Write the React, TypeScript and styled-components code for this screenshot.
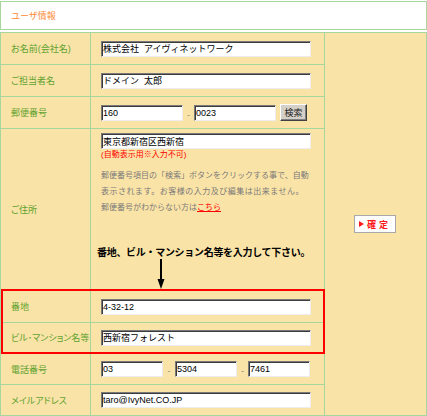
import React from "react";
import styled, { createGlobalStyle } from "styled-components";

const GlobalStyle = createGlobalStyle`
  * { box-sizing: border-box; }
  body {
    margin: 0;
    background: #ffffff;
    font-family: "Liberation Sans", "Noto Sans CJK JP", sans-serif;
  }
`;

const GREEN = "#a6d79c";
const TAN = "#fae3a6";

const Page = styled.div`
  width: 427px;
  padding-top: 1px;
`;

const Header = styled.div`
  height: 29px;
  border: 1px solid ${GREEN};
  background: #ffffff;
  display: flex;
  align-items: center;
  padding-left: 10px;
  color: #ff8a35;
  font-size: 9px;
`;

const Table = styled.div`
  margin-top: 2px;
  display: grid;
  grid-template-columns: 324px 1fr;
  border: 1px solid ${GREEN};
  background: ${TAN};
`;

const LeftPart = styled.div`
  display: flex;
  flex-direction: column;
`;

const Row = styled.div<{ $h: number; $boxed?: boolean; $noLine?: boolean }>`
  display: grid;
  grid-template-columns: ${(p) => (p.$boxed ? "88px" : "90px")} 1fr;
  height: ${(p) => p.$h + (p.$noLine ? 0 : 1)}px;
  border-bottom: ${(p) => (p.$noLine ? "none" : `1px solid ${GREEN}`)};
  border-right: ${(p) => (p.$boxed ? "none" : `1px solid ${GREEN}`)};
`;

const Label = styled.div<{ $boxed?: boolean }>`
  display: flex;
  align-items: center;
  padding-left: ${(p) => (p.$boxed ? 8 : 10)}px;
  border-right: 1px solid ${GREEN};
  color: #5ea22f;
  font-size: 9px;
  font-feature-settings: "palt";
  white-space: nowrap;
  overflow: hidden;
`;

const Field = styled.div`
  display: flex;
  align-items: center;
  padding-left: 10px;
`;

const AddressField = styled.div`
  display: flex;
  flex-direction: column;
  padding: 4px 10px 0 10px;
`;

const RedBox = styled.div`
  border: 2px solid #ff0000;
`;

const Input = styled.input<{ $w: number }>`
  width: ${(p) => p.$w}px;
  height: 16px;
  margin: 0;
  padding: 0 1px;
  border: 1px solid;
  border-color: #7a7a7a #ededed #ededed #7a7a7a;
  box-shadow: inset 1px 1px 0 #3c3c3c;
  background: #ffffff;
  color: #000000;
  font-family: "Liberation Sans", "Noto Sans CJK JP", sans-serif;
  font-size: 9px;
  outline: none;
`;

const Dash = styled.span<{ $w: number }>`
  width: ${(p) => p.$w}px;
  text-align: center;
  color: #8a8a8a;
  font-size: 9px;
  padding-top: 4px;
`;

const SearchButton = styled.button`
  margin-left: 4px;
  width: 27px;
  height: 17px;
  padding: 0;
  border: 1px solid;
  border-color: #ffffff #404040 #404040 #ffffff;
  box-shadow: inset -1px -1px 0 #808080;
  background: #d4d0c8;
  color: #222222;
  font-family: "Noto Sans CJK JP", sans-serif;
  font-size: 9px;
`;

const AutoNote = styled.div`
  height: 12px;
  line-height: 12px;
  color: #ff0000;
  font-size: 8px;
  white-space: nowrap;
`;

const Help = styled.div`
  margin-top: 7px;
  display: flex;
  flex-direction: column;
  color: #7a7a7a;
  font-size: 8px;
`;

const HelpLine = styled.span<{ $spacing?: number }>`
  height: 16px;
  line-height: 16px;
  letter-spacing: ${(p) => p.$spacing ?? 0}px;
  white-space: nowrap;
`;

const HelpLink = styled.a`
  color: #ff0000;
  text-decoration: underline;
`;

const Callout = styled.div`
  margin: 30px 0 1px -4px;
  height: 12px;
  line-height: 12px;
  color: #000000;
  font-family: "Noto Sans CJK JP", sans-serif;
  font-weight: bold;
  font-size: 10px;
  letter-spacing: -0.3px;
  white-space: nowrap;
`;

const ArrowIcon = styled.svg`
  display: block;
  margin-left: 56px;
`;

const SideColumn = styled.div`
  display: flex;
  align-items: center;
  justify-content: center;
  padding-right: 2px;
`;

const ConfirmButton = styled.button`
  width: 42px;
  height: 18px;
  padding: 0 0 0 1px;
  display: flex;
  align-items: center;
  justify-content: center;
  gap: 3px;
  border: 1px solid #a9a9a9;
  background: #ffffff;
  color: #ff1a1a;
  font-family: "Noto Sans CJK JP", sans-serif;
  font-weight: bold;
  font-size: 9px;
  letter-spacing: 3px;
`;

const App: React.FC = () => {
  return (
    <Page>
      <GlobalStyle />
      <Header>ユーザ情報</Header>
      <Table>
        <LeftPart>
          <Row $h={31}>
            <Label>お名前(会社名)</Label>
            <Field>
              <Input $w={210} defaultValue="株式会社  アイヴィネットワーク" />
            </Field>
          </Row>
          <Row $h={31}>
            <Label>ご担当者名</Label>
            <Field>
              <Input $w={210} defaultValue="ドメイン  太郎" />
            </Field>
          </Row>
          <Row $h={31}>
            <Label>郵便番号</Label>
            <Field>
              <Input $w={82} defaultValue="160" />
              <Dash $w={11}>-</Dash>
              <Input $w={82} defaultValue="0023" />
              <SearchButton>検索</SearchButton>
            </Field>
          </Row>
          <Row $h={160} $noLine>
            <Label>ご住所</Label>
            <AddressField>
              <Input $w={210} defaultValue="東京都新宿区西新宿" />
              <AutoNote>(自動表示用※入力不可)</AutoNote>
              <Help>
                <HelpLine>郵便番号項目の「検索」ボタンをクリックする事で、自動</HelpLine>
                <HelpLine $spacing={0.5}>表示されます。お客様の入力及び編集は出来ません。</HelpLine>
                <HelpLine>
                  郵便番号がわからない方は<HelpLink href="#/">こちら</HelpLink>
                </HelpLine>
              </Help>
              <Callout>番地、ビル・マンション名等を入力して下さい。</Callout>
              <ArrowIcon width="8" height="30" viewBox="0 0 8 30">
                <line x1="4" y1="0" x2="4" y2="22" stroke="#000" strokeWidth="2" />
                <polygon points="0.5,20 7.5,20 4,30" fill="#000" />
              </ArrowIcon>
            </AddressField>
          </Row>
          <RedBox>
            <Row $h={31} $boxed>
              <Label $boxed>番地</Label>
              <Field>
                <Input $w={210} defaultValue="4-32-12" />
              </Field>
            </Row>
            <Row $h={29} $boxed $noLine>
              <Label $boxed>ビル･マンション名等</Label>
              <Field>
                <Input $w={210} defaultValue="西新宿フォレスト" />
              </Field>
            </Row>
          </RedBox>
          <Row $h={30}>
            <Label>電話番号</Label>
            <Field>
              <Input $w={62} defaultValue="03" />
              <Dash $w={12}>-</Dash>
              <Input $w={62} defaultValue="5304" />
              <Dash $w={11}>-</Dash>
              <Input $w={62} defaultValue="7461" />
            </Field>
          </Row>
          <Row $h={30} $noLine>
            <Label>メイルアドレス</Label>
            <Field>
              <Input $w={210} defaultValue="taro@IvyNet.CO.JP" />
            </Field>
          </Row>
        </LeftPart>
        <SideColumn>
          <ConfirmButton>
            <svg width="5" height="6" viewBox="0 0 5 6">
              <polygon points="0,0 5,3 0,6" fill="#ff1a1a" />
            </svg>
            確定
          </ConfirmButton>
        </SideColumn>
      </Table>
    </Page>
  );
};

export default App;
